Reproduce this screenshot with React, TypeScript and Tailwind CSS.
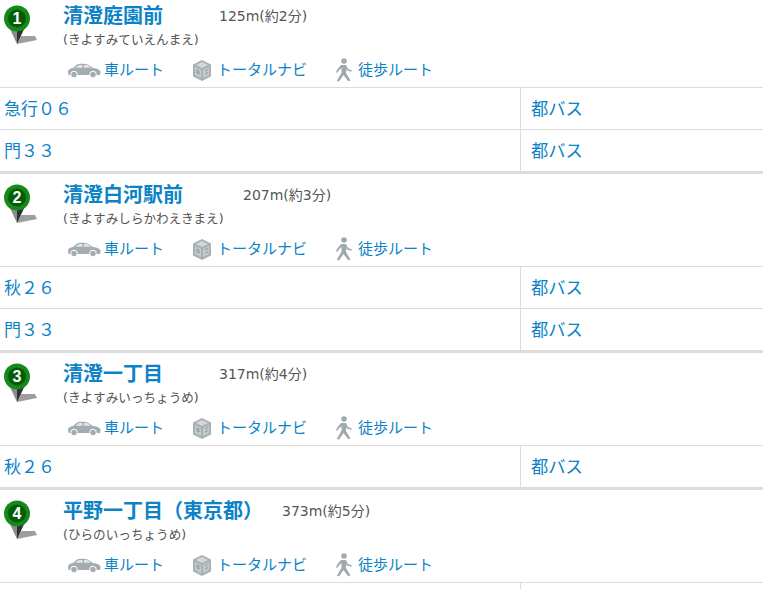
import type { ReactNode } from "react";

const stops = [
  { no: 1, name: "清澄庭園前", kana: "(きよすみていえんまえ)", dist: "125m(約2分)", distGap: "ml-[56px]", routes: ["急行０６", "門３３"] },
  { no: 2, name: "清澄白河駅前", kana: "(きよすみしらかわえきまえ)", dist: "207m(約3分)", distGap: "ml-[60px]", routes: ["秋２６", "門３３"] },
  { no: 3, name: "清澄一丁目", kana: "(きよすみいっちょうめ)", dist: "317m(約4分)", distGap: "ml-[56px]", routes: ["秋２６"] },
  { no: 4, name: "平野一丁目（東京都）", kana: "(ひらのいっちょうめ)", dist: "373m(約5分)", distGap: "ml-[19px]", routes: [""] },
];

function Pin({ no }: { no: number }) {
  return (
    <svg width="38" height="44" viewBox="0 0 38 44" className="shrink-0">
      <path d="M17 43 L37 39 L35 35 L21 35 Z" fill="#8d8d8d" opacity="0.85" />
      <path d="M9 26 L17 43 L25 26 Z" fill="#8a8d8f" />
      <path d="M17 26 L17 43 L25 26 Z" fill="#2f3133" />
      <circle cx="17" cy="17.500" r="13" fill="#15891a" />
      <circle cx="17" cy="17.500" r="9" fill="#045c06" />
      <text x="17" y="23" textAnchor="middle" fontSize="16" fontWeight="700" fill="#fff" fontFamily="'Liberation Sans', sans-serif">
        {no}
      </text>
    </svg>
  );
}

function CarIcon() {
  return (
    <svg width="34" height="17" viewBox="0 0 34 16" className="shrink-0">
      <path d="M1 9c0-2 2-3 5-3.500l4-3.500c1-.7 8-1.200 11 .2l5 3.300c4 .5 7 1.500 7.500 3.700l-.5 3.300H1.500z" fill="#a3acb0" />
      <path d="M11 3c1-.4 3-.5 4.500-.5v2.700H8.500zM17 2.500c1 0 3 .1 4 .6l3 2.100h-7z" fill="#e4e7e8" />
      <circle cx="7" cy="12" r="3.300" fill="#a3acb0" stroke="#fff" strokeWidth="1" />
      <circle cx="26" cy="12" r="3.300" fill="#a3acb0" stroke="#fff" strokeWidth="1" />
    </svg>
  );
}

function BoxIcon() {
  return (
    <svg width="20" height="23" viewBox="0 0 20 23" className="shrink-0">
      <path d="M10 1l9 4.500v12L10 22l-9-4.500v-12z" fill="#a9b1b5" />
      <path d="M10 3l6 3-6 3-6-3z" fill="#d3d8da" />
      <path d="M3 8l6 3v8l-6-3zM11 11l6-3v8l-6 3z" fill="#c4cacd" />
      <path d="M5 11l2 1v3l-2-1zM13 12l3-1.500M13 15l3-1.500" stroke="#8f999e" strokeWidth="1" fill="none" />
    </svg>
  );
}

function WalkIcon() {
  return (
    <svg width="18" height="24" viewBox="0 0 18 24" className="shrink-0">
      <circle cx="9" cy="3" r="2.800" fill="#a0a9ad" />
      <path d="M6 7h5l2 4 4 1.500-.6 1.300L12 12.500l-.6-1.500-.4 4 4.500 7.500-2.300.8L8.500 17 4 23.500l-2.200-.8 4.700-8V10L4 12.500 2 15 1 14l2-3.500z" fill="#a0a9ad" />
    </svg>
  );
}

function ActionLink({ icon, label, gap }: { icon: ReactNode; label: string; gap: string }) {
  return (
    <a className={`flex items-center ${gap} text-[15px] text-[#0b83c6]`}>
      {icon}
      <span>{label}</span>
    </a>
  );
}

function StopSection({ stop }: { stop: (typeof stops)[number] }) {
  return (
    <section className="border-b-[3px] border-[#dcdcdc] last:border-b-0">
      <div className="flex h-[93px] border-b border-[#dcdcdc] pt-[5px]">
        <div className="w-[63px] shrink-0 pt-[1px]">
          <Pin no={stop.no} />
        </div>
        <div className="flex flex-col">
          <div className="flex h-[32px] items-center">
            <h2 className="text-[20px] leading-[32px] font-bold text-[#0b83c6]">{stop.name}</h2>
            <span className={`${stop.distGap} text-[14px] text-[#555]`}>{stop.dist}</span>
          </div>
          <p className="h-[14px] pt-px text-[12.600px] leading-[14px] text-[#555]">{stop.kana}</p>
          <div className="mt-[12px] flex h-[24px] items-center">
            <ActionLink icon={<CarIcon />} label="車ルート" gap="ml-[4px] gap-[3px]" />
            <ActionLink icon={<BoxIcon />} label="トータルナビ" gap="ml-[28px] gap-[5px]" />
            <ActionLink icon={<WalkIcon />} label="徒歩ルート" gap="ml-[28px] gap-[5px]" />
          </div>
        </div>
      </div>
      {stop.routes.map((route, i) => (
        <div key={route + i} className="flex h-[42px] border-b border-[#dcdcdc] text-[#0b83c6] last:h-[41px] last:border-b-0">
          <div className="w-[521px] border-r border-[#dcdcdc] pt-px pl-[4px] text-[17px] leading-[41px]">{route}</div>
          {route && <div className="pt-px pl-[10px] text-[17.300px] leading-[41px]">都バス</div>}
        </div>
      ))}
    </section>
  );
}

export default function App() {
  return (
    <main className="h-[589px] w-[763px] overflow-hidden bg-white font-['DejaVu_Sans','Noto_Sans_CJK_JP',sans-serif]">
      <div className="-mt-[5px]">
        {stops.map((stop) => (
          <StopSection key={stop.no} stop={stop} />
        ))}
      </div>
    </main>
  );
}
